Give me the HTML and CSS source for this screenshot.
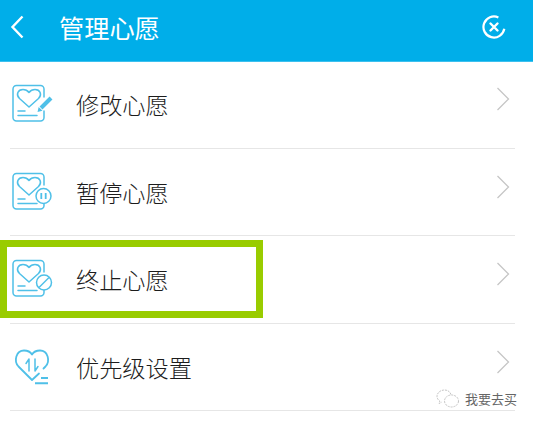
FILE: index.html
```html
<!DOCTYPE html>
<html lang="zh">
<head>
<meta charset="utf-8">
<title>管理心愿</title>
<link rel="stylesheet" href="styles.css">
</head>
<body>
<svg class="defs" width="0" height="0" aria-hidden="true">
  <defs>
    <g id="doc" fill="none" stroke="#4fc0e8" stroke-width="1.500" stroke-linecap="round" stroke-linejoin="round">
      <path d="M34 17V9a3.500 3.500 0 0 0-3.500-3.500h-24A3.500 3.500 0 0 0 3 9v28.500A3.500 3.500 0 0 0 6.500 41h24a3.500 3.500 0 0 0 3.500-3.500V31"/>
      <path d="M19 27 9.500 18.500C5.500 14.500 8 9.500 13 9.500c2.500 0 4.500 1 6 3 1.500-2 3.500-3 6-3 5 0 7.500 5 3.500 9z"/>
      <path d="M8 31h7M8 35.500h19"/>
    </g>
  </defs>
</svg>
<main class="screen">
  <header class="topbar">
    <svg class="back" width="16" height="24" viewBox="0 0 16 24"><path d="M12.500 1.500 2.500 12l10 10.500" fill="none" stroke="#fff" stroke-width="2.400"/></svg>
    <h1 class="title">管理心愿</h1>
    <svg class="close" width="24" height="24" viewBox="0 0 24 24" fill="none" stroke="#fff">
      <path d="M22.300 13.800A10.500 10.500 0 1 1 16.400 2.500" stroke-width="2.200"/>
      <path d="M8.500 8.500l7 7M15.500 8.500l-7 7" stroke-width="2.400" stroke-linecap="round"/>
    </svg>
  </header>
  <ul class="menu">
    <li class="row">
      <svg class="ico" width="48" height="48" viewBox="0 0 48 48"><use href="#doc"/><path d="M31 28 41 18" fill="none" stroke="#4fc0e8" stroke-width="4"/><path d="M27.500 32l1.200-5 3.800 3.800z" fill="#4fc0e8"/></svg>
      <span class="label">修改心愿</span>
      <svg class="chev" width="14" height="24" viewBox="0 0 14 24"><path d="M1.500 1 12.500 12 1.500 23" fill="none" stroke="#c6c6c6" stroke-width="1.300"/></svg>
    </li>
    <li class="row">
      <svg class="ico" width="48" height="48" viewBox="0 0 48 48"><use href="#doc"/><circle cx="33.500" cy="28" r="7.500" fill="#fff" stroke="#4fc0e8" stroke-width="1.500"/><path d="M31.300 25v6M35.700 25v6" stroke="#4fc0e8" stroke-width="1.800" fill="none"/></svg>
      <span class="label">暂停心愿</span>
      <svg class="chev" width="14" height="24" viewBox="0 0 14 24"><path d="M1.500 1 12.500 12 1.500 23" fill="none" stroke="#c6c6c6" stroke-width="1.300"/></svg>
    </li>
    <li class="row">
      <svg class="ico" width="48" height="48" viewBox="0 0 48 48"><use href="#doc"/><circle cx="34" cy="27.500" r="7.500" fill="#fff" stroke="#4fc0e8" stroke-width="1.500"/><path d="M29 32.500l10-10" stroke="#4fc0e8" stroke-width="1.500" fill="none"/></svg>
      <span class="label">终止心愿</span>
      <svg class="chev" width="14" height="24" viewBox="0 0 14 24"><path d="M1.500 1 12.500 12 1.500 23" fill="none" stroke="#c6c6c6" stroke-width="1.300"/></svg>
    </li>
    <li class="row">
      <svg class="ico" width="48" height="48" viewBox="0 0 48 48" fill="none" stroke="#4fc0e8" stroke-linecap="round" stroke-linejoin="round">
        <path d="M29 30.500 22 37 8.500 23.500C3.500 18 6 7.500 14 7.500c3.500 0 6.500 1.500 8 4 1.500-2.500 4.500-4 8-4 8 0 10.500 10.500 5.500 16l-2 2" stroke-width="1.800"/>
        <path d="M19 28V16l-3 4.500M25 16v12l3-4.500" stroke-width="1.500"/>
        <path d="M31 35h7M25 40.300h13" stroke-width="1.900" stroke-linecap="butt"/>
      </svg>
      <span class="label">优先级设置</span>
      <svg class="chev" width="14" height="24" viewBox="0 0 14 24"><path d="M1.500 1 12.500 12 1.500 23" fill="none" stroke="#c6c6c6" stroke-width="1.300"/></svg>
    </li>
  </ul>
  <div class="highlight"></div>
  <div class="mark">
    <svg width="24" height="20" viewBox="0 0 24 20" fill="none" stroke="#c4c4c4" stroke-width="1" stroke-dasharray="2 1">
      <path d="M15 5.500C14 2.500 11.500 1 8.500 1 4.500 1 1 3.800 1 7.300c0 2 1 3.600 2.800 4.800L3 14.500l2.800-1.400"/>
      <ellipse cx="15.500" cy="12" rx="7" ry="6"/>
    </svg>
    <span class="mark-text">我要去买</span>
  </div>
</main>
</body>
</html>
```

FILE: styles.css
```css
* {
  box-sizing: border-box;
}

html,
body {
  margin: 0;
  padding: 0;
}

body {
  background: #fff;
  font-family: "Noto Sans CJK SC", "Liberation Sans", sans-serif;
}

.defs {
  display: block;
}

.screen {
  position: relative;
  width: 533px;
  height: 423px;
  overflow: hidden;
  background: #fff;
}

.topbar {
  display: flex;
  align-items: center;
  height: 62px;
  padding: 0 27px 8px 10px;
  background: #00aee9;
  border-bottom: 1px solid #3dc0ee;
  color: #fff;
}

.back {
  flex: none;
}

.title {
  flex: 1;
  margin: 0 0 0 33px;
  font-size: 25.200px;
  font-weight: 400;
  line-height: 34px;
}

.close {
  flex: none;
}

.menu {
  margin: -1px 0 0;
  padding: 0 18px 0 10px;
  list-style: none;
}

.row {
  display: flex;
  align-items: center;
  height: 87.600px;
  padding: 0 5px 0 0;
  border-bottom: 1px solid #e6e6e6;
}

.ico {
  flex: none;
}

.label {
  flex: 1;
  margin-left: 18px;
  font-size: 23.200px;
  font-weight: 300;
  line-height: 32px;
  color: #1c1c1c;
}

.chev {
  flex: none;
  margin-top: -10px;
}

.highlight {
  position: absolute;
  left: 0;
  top: 240px;
  width: 263px;
  height: 78px;
  border: 7px solid #99cc00;
}

.mark {
  position: absolute;
  left: 432px;
  top: 389px;
  display: flex;
  align-items: center;
  gap: 5px;
  padding: 0 4px;
  height: 20px;
  background: #fff;
}

.mark-text {
  font-size: 13px;
  line-height: 20px;
  color: #666;
}
```
